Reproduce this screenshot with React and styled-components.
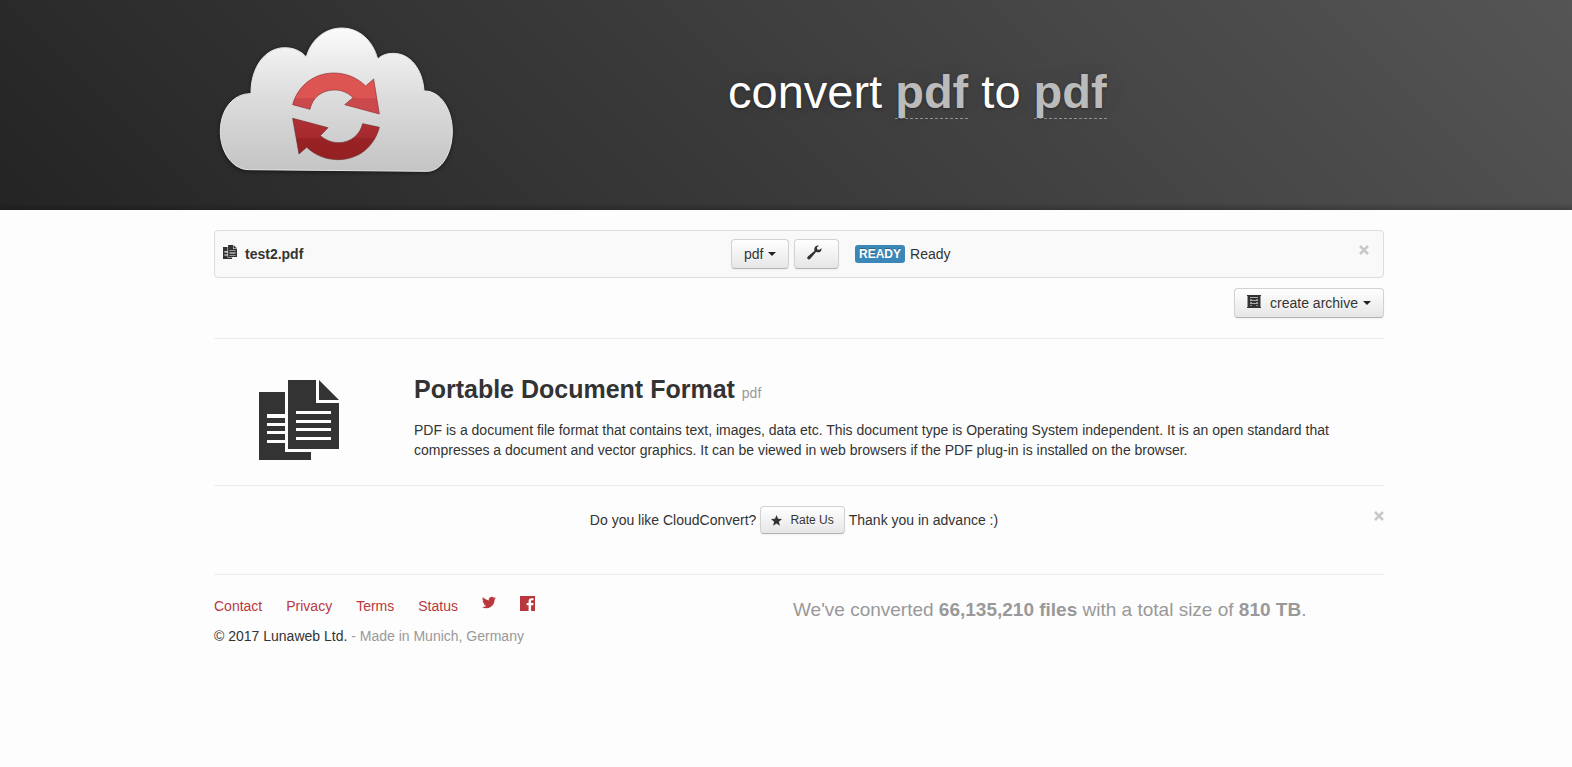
import styled, { createGlobalStyle, css } from "styled-components";

const GlobalStyle = createGlobalStyle`
  * {
    box-sizing: border-box;
  }
  body {
    margin: 0;
    background-color: #fdfdfd;
    color: #333;
    font-family: "Liberation Sans", Arial, Helvetica, sans-serif;
    font-size: 14px;
    line-height: 20px;
  }
`;

const Page = styled.div`
  width: 100%;
`;

const Hero = styled.header`
  padding: 25px 0 35px 26px;
  background: linear-gradient(
      to top,
      rgba(0, 0, 0, 0.2) 0,
      rgba(0, 0, 0, 0) 7px
    ),
    linear-gradient(45deg, #242424 0%, #555 100%);
`;

const Main = styled.main`
  padding: 20px 0 0 26px;
`;

const Container = styled.div`
  max-width: 1170px;
  margin: 0 auto;
`;

const Split = styled.div`
  display: grid;
  grid-template-columns: ${(props) => props.$columns};
  align-items: ${(props) => props.$align || "center"};
`;

const Logo = styled.svg`
  display: block;
  width: 240px;
  height: 150px;
  filter: drop-shadow(0 1px 2px rgba(0, 0, 0, 0.5));
`;

const Title = styled.h1`
  margin: 0;
  padding-bottom: 16px;
  color: #fff;
  font-size: 47px;
  font-weight: 400;
  line-height: 50px;
  text-shadow: 0 1px 3px rgba(0, 0, 0, 0.4), 0 0 30px rgba(0, 0, 0, 0.075);
`;

const FormatLink = styled.a`
  display: inline-block;
  border-bottom: 1px dashed #8f8f96;
  color: #bbb;
  font-weight: 700;
  line-height: 52px;
  text-decoration: none;
`;

const FileRow = styled.div`
  display: grid;
  grid-template-columns: 508px 124px 1fr auto;
  align-items: center;
  padding: 8px;
  border: 1px solid #ddd;
  border-radius: 4px;
  background-color: #f9f9f9;
`;

const FileName = styled.div`
  display: flex;
  align-items: center;
  gap: 8px;
  font-weight: 700;

  svg {
    margin-bottom: 4px;
  }
`;

const ButtonGroup = styled.div`
  display: flex;
  gap: 5px;
`;

const Button = styled.button`
  display: inline-flex;
  align-items: center;
  justify-content: center;
  gap: ${(props) => props.$gap || 5}px;
  height: 30px;
  padding: 0 12px;
  border: 1px solid #d2d2d2;
  border-bottom-color: #b3b3b3;
  border-radius: 4px;
  background: linear-gradient(to bottom, #fff, #e6e6e6);
  box-shadow: inset 0 1px 0 rgba(255, 255, 255, 0.2),
    0 1px 2px rgba(0, 0, 0, 0.05);
  color: #333;
  font: inherit;
  text-shadow: 0 1px 1px rgba(255, 255, 255, 0.75);
  cursor: pointer;

  ${(props) =>
    props.$small &&
    css`
      height: 28px;
      margin: 0 4px;
      padding: 0 10px;
      font-size: 12px;
    `}
`;

const ToolButton = styled(Button)`
  padding: 0 16px 4px 12px;
`;

const ArchiveButton = styled(Button)`
  > svg {
    margin-bottom: 4px;
  }
`;

const Caret = styled.span`
  border-top: 4px solid #222;
  border-right: 4px solid transparent;
  border-left: 4px solid transparent;
`;

const Status = styled.div`
  display: flex;
  align-items: center;
  gap: 5px;
`;

const ButtonLabel = styled.span`
  display: flex;
  align-items: center;
  gap: 5px;
`;

const Badge = styled.span`
  padding: 0 4px;
  border-radius: 3px;
  background-color: #3a87b8;
  color: #fff;
  font-size: 12px;
  font-weight: 700;
  line-height: 18px;
  text-shadow: 0 -1px 0 rgba(0, 0, 0, 0.25);
`;

const CloseButton = styled.button`
  display: flex;
  padding: 0 ${(props) => props.$inset || 0}px 8px 0;
  border: 0;
  background: none;
  color: #c8c8c8;
  cursor: pointer;
`;

const Actions = styled.div`
  display: flex;
  justify-content: flex-end;
  padding: 10px 0 20px;
`;

const FormatInfo = styled.section`
  display: grid;
  grid-template-columns: 200px 1fr;
  padding: 32px 0 25px;
  border-top: 1px solid #eee;
`;

const FormatIcon = styled.div`
  padding: 9px 0 0 45px;

  svg {
    display: block;
  }
`;

const FormatName = styled.h2`
  margin: 0 0 12px;
  font-size: 25px;
  line-height: 37px;

  small {
    color: #999;
    font-size: 14px;
    font-weight: 400;
    line-height: 20px;
  }
`;

const Text = styled.p`
  margin: 0;
`;

const RateBar = styled.section`
  display: flex;
  align-items: center;
  padding: 20px 0 40px;
  border-top: 1px solid #eee;
`;

const RateText = styled.div`
  display: flex;
  flex: 1;
  align-items: center;
  justify-content: center;
`;

const Footer = styled.footer`
  padding-top: 21px;
  border-top: 1px solid #eee;
`;

const FooterLinks = styled.nav`
  display: flex;
  gap: 24px;
  margin-bottom: 10px;
`;

const FooterLink = styled.a`
  color: #b8383d;
  text-decoration: none;

  svg {
    display: block;
  }
`;

const Muted = styled.span`
  color: #999;
`;

const Stats = styled.p`
  margin: 4px 0 0;
  color: #999;
  font-size: 19px;
`;

function CloudLogo() {
  return (
    <Logo viewBox="42 45 720 450" role="img" aria-label="CloudConvert">
      <defs>
        <linearGradient id="cloud" x1="0" y1="0" x2="0" y2="1">
          <stop offset="0" stopColor="#fbfbfb" />
          <stop offset="0.45" stopColor="#dedede" />
          <stop offset="1" stopColor="#c4c4c4" />
        </linearGradient>
        <linearGradient id="topArrow" x1="0" y1="0" x2="0" y2="1">
          <stop offset="0.62" stopColor="#dd5553" />
          <stop offset="0.62" stopColor="#cb484c" />
        </linearGradient>
        <linearGradient id="bottomArrow" x1="0" y1="0" x2="0" y2="1">
          <stop offset="0" stopColor="#b03034" />
          <stop offset="0.47" stopColor="#a52a2d" />
          <stop offset="0.47" stopColor="#982225" />
          <stop offset="1" stopColor="#952022" />
        </linearGradient>
      </defs>
      <path
        fill="url(#cloud)"
        stroke="#e6e6e6"
        strokeWidth="3"
        d="M145 479C96 478 61 424 61 365C61 300 98 250 153 251C152 172 195 113 254 113C281 113 303 123 319 141C333 90 374 54 425 54C478 54 519 92 533 147C546 135 562 130 580 130C630 130 668 177 672 243C722 241 757 300 757 363C757 430 724 484 682 484Z"
      />
      <path
        fill="url(#topArrow)"
        stroke="#8d3236"
        strokeWidth="2"
        d="M278 284C294 226 342 189 402 189C440 189 474 205 497 228L521 207L538 312L434 284L459 263C444 248 426 240 403 240C366 240 337 263 330 298Z"
      />
      <path
        fill="url(#bottomArrow)"
        stroke="#70282a"
        strokeWidth="2"
        d="M538 352C522 412 474 449 414 449C377 449 345 435 320 412L297 432L278 325L384 353L361 377C377 390 394 398 416 398C451 398 480 375 488 341Z"
      />
    </Logo>
  );
}

function DocumentIcon({ size }) {
  return (
    <svg width={size} height={size} viewBox="0 0 80 80" fill="currentColor">
      <path d="M0 12H26V34H8V38H26V43H8V46H26V51H8V54H26V60H8V63H26V72H52V80H0Z" />
      <path
        fillRule="evenodd"
        d="M29 0H57V23H80V69H29ZM37 31V34H72V31ZM37 40V43H72V40ZM37 48V51H72V48ZM37 57V60H72V57Z"
      />
      <path d="M60 0L80 20H60Z" />
    </svg>
  );
}

function WrenchIcon() {
  return (
    <svg width="15" height="15" viewBox="0 0 15 15" fill="currentColor">
      <path d="M14.5 3.2C15 5.6 13 7.7 10.6 7.3L9 7L3.3 13.8C2.4 14.8 1 14.6 .5 13.7C0 12.9 .2 12 .9 11.4L7.4 5.9L7.3 4.5C7 2 9.2 0 12 .5L9.9 2.4L10.3 4.4L12.4 4.8Z" />
    </svg>
  );
}

function ArchiveIcon() {
  return (
    <svg width="14" height="13" viewBox="0 0 14 13" fill="none">
      <path d="M0 0H14V1H0ZM1 1H13V12H1ZM0 12H14V13H0Z" fill="#333" />
      <path d="M3 2.5H11M3 5.5H11M3 8.5H11" stroke="#aaa" />
      <path d="M3 4.5H5M9 4.5H11M3 7.5H5M9 7.5H11M3 10.5H5M9 10.5H11" stroke="#888" />
      <path d="M.5 1V12M13.5 1V12" stroke="#999" />
    </svg>
  );
}

function StarIcon() {
  return (
    <svg width="11" height="11" viewBox="0 0 11 11" fill="currentColor">
      <path d="M5.5 0L7 3.8L11 4.1L7.9 6.7L8.9 10.8L5.5 8.6L2.1 10.8L3.1 6.7L0 4.1L4 3.8Z" />
    </svg>
  );
}

function CloseIcon() {
  return (
    <svg width="10" height="10" viewBox="0 0 10 10">
      <path d="M1 1L9 9M9 1L1 9" stroke="currentColor" strokeWidth="2.5" />
    </svg>
  );
}

function TwitterIcon() {
  return (
    <svg width="14" height="16" viewBox="0 1 24 27" fill="currentColor">
      <path d="M24 4.6a10 10 0 0 1-2.8.8 5 5 0 0 0 2.1-2.7 10 10 0 0 1-3.1 1.2 4.9 4.9 0 0 0-8.4 4.5A14 14 0 0 1 1.7 3.1a4.9 4.9 0 0 0 1.5 6.6 5 5 0 0 1-2.2-.6v.1a4.9 4.9 0 0 0 3.9 4.8 5 5 0 0 1-2.2.1 4.9 4.9 0 0 0 4.6 3.4A9.9 9.9 0 0 1 0 19.5a14 14 0 0 0 7.5 2.2c9.1 0 14-7.5 14-14v-.6A10 10 0 0 0 24 4.6Z" />
    </svg>
  );
}

function FacebookIcon() {
  return (
    <svg width="15" height="15" viewBox="0 0 14 14">
      <path fill="currentColor" d="M0 0H14V14H0Z" />
      <path
        fill="#fff"
        d="M8 14V8.6H6.2V6.6H8V5C8 3 9.2 2 11 2H12.6V4H11.4C10.6 4 10.3 4.4 10.3 5.1V6.6H12.6L12.3 8.6H10.3V14Z"
      />
    </svg>
  );
}

const links = ["Contact", "Privacy", "Terms", "Status"];

function App() {
  return (
    <Page>
      <GlobalStyle />
      <Hero>
        <Container>
          <Split $columns="514px 1fr">
            <CloudLogo />
            <Title>
              convert <FormatLink href="#from">pdf</FormatLink> to{" "}
              <FormatLink href="#to">pdf</FormatLink>
            </Title>
          </Split>
        </Container>
      </Hero>
      <Main>
        <Container>
          <FileRow>
            <FileName>
              <DocumentIcon size={14} />
              test2.pdf
            </FileName>
            <ButtonGroup>
              <Button type="button">
                pdf <Caret />
              </Button>
              <ToolButton type="button" aria-label="Options">
                <WrenchIcon />
              </ToolButton>
            </ButtonGroup>
            <Status>
              <Badge>READY</Badge>
              Ready
            </Status>
            <CloseButton type="button" aria-label="Remove file" $inset={6}>
              <CloseIcon />
            </CloseButton>
          </FileRow>
          <Actions>
            <ArchiveButton type="button" $gap={9}>
              <ArchiveIcon />
              <ButtonLabel>
                create archive <Caret />
              </ButtonLabel>
            </ArchiveButton>
          </Actions>
          <FormatInfo>
            <FormatIcon>
              <DocumentIcon size={80} />
            </FormatIcon>
            <div>
              <FormatName>
                Portable Document Format <small>pdf</small>
              </FormatName>
              <Text>
                PDF is a document file format that contains text, images, data
                etc. This document type is Operating System independent. It is
                an open standard that compresses a document and vector
                graphics. It can be viewed in web browsers if the PDF plug-in
                is installed on the browser.
              </Text>
            </div>
          </FormatInfo>
          <RateBar>
            <RateText>
              Do you like CloudConvert?
              <Button type="button" $small $gap={8}>
                <StarIcon />
                Rate Us
              </Button>
              Thank you in advance :)
            </RateText>
            <CloseButton type="button" aria-label="Dismiss">
              <CloseIcon />
            </CloseButton>
          </RateBar>
          <Footer>
            <Split $columns="579px 1fr" $align="start">
              <div>
                <FooterLinks>
                  {links.map((name) => (
                    <FooterLink key={name} href={`#${name.toLowerCase()}`}>
                      {name}
                    </FooterLink>
                  ))}
                  <FooterLink href="#twitter" aria-label="Twitter">
                    <TwitterIcon />
                  </FooterLink>
                  <FooterLink href="#facebook" aria-label="Facebook">
                    <FacebookIcon />
                  </FooterLink>
                </FooterLinks>
                <Text>
                  © 2017 Lunaweb Ltd. <Muted>- Made in Munich, Germany</Muted>
                </Text>
              </div>
              <Stats>
                We've converted <strong>66,135,210 files</strong> with a total
                size of <strong>810 TB</strong>.
              </Stats>
            </Split>
          </Footer>
        </Container>
      </Main>
    </Page>
  );
}

export default App;
